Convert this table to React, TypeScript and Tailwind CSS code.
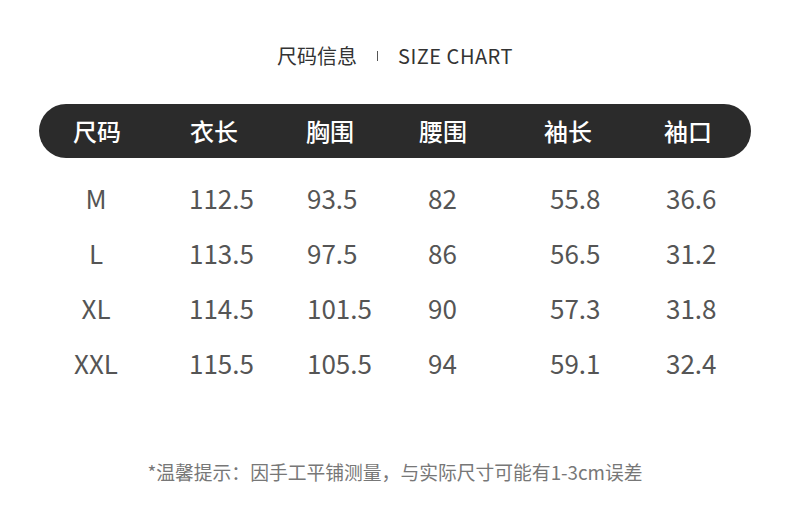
const font = { fontFamily: '"Noto Sans CJK SC", "Noto Sans", sans-serif' };

const rows = [
  ["M", "112.5", "93.5", "82", "55.8", "36.6"],
  ["L", "113.5", "97.5", "86", "56.5", "31.2"],
  ["XL", "114.5", "101.5", "90", "57.3", "31.8"],
  ["XXL", "115.5", "105.5", "94", "59.1", "32.4"],
];

const heads = ["尺码", "衣长", "胸围", "腰围", "袖长", "袖口"];

export default function App() {
  return (
    <div className="w-[790px] h-[531px] bg-white" style={font}>
      <div className="flex items-center justify-center pt-[40px] h-[72px] text-[#333]">
        <span className="text-[20px] leading-none">尺码信息</span>
        <span className="mx-[20px] w-px h-[10px] bg-[#555]" />
        <span className="text-[20px] leading-none tracking-[0.5px]">SIZE CHART</span>
      </div>

      <div className="mx-[39px] mt-[32px] h-[54px] rounded-full bg-[#2b2b2b] grid grid-cols-[151px_116px_113px_125px_120px_1fr] items-center text-white text-[24px] font-medium">
        {heads.map((h, i) => (
          <div key={h} className={i === 0 ? "pl-[34px]" : ""}>
            {h}
          </div>
        ))}
      </div>

      <div className="mx-[39px] mt-[12px]">
        {rows.map((r) => (
          <div
            key={r[0]}
            className="grid grid-cols-[150px_118px_121px_122px_116px_1fr] items-center h-[55px] text-[26px] text-[#555]"
          >
            <div className="w-[114px] text-center">{r[0]}</div>
            {r.slice(1).map((v, i) => (
              <div key={i}>{v}</div>
            ))}
          </div>
        ))}
      </div>

      <div className="mt-[68px] text-center text-[18.8px] text-[#777]">
        *温馨提示：因手工平铺测量，与实际尺寸可能有1-3cm误差
      </div>
    </div>
  );
}
